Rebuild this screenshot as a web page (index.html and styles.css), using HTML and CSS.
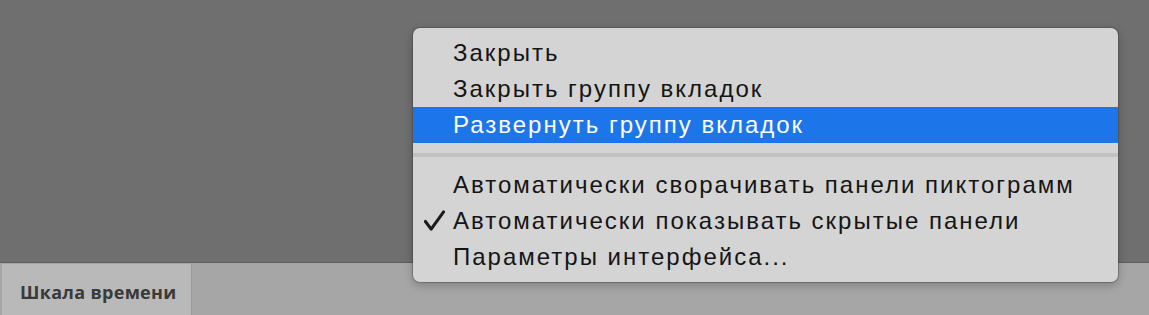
FILE: index.html
```html
<!DOCTYPE html>
<html lang="ru">
<head>
<meta charset="utf-8">
<link rel="stylesheet" href="styles.css">
</head>
<body>
<div class="app">
  <div class="workspace"></div>
  <div class="bottombar">
    <div class="tab">Шкала времени</div>
  </div>
  <div class="menu">
    <div class="item"><span class="mark"></span><span class="label">Закрыть</span></div>
    <div class="item"><span class="mark"></span><span class="label">Закрыть группу вкладок</span></div>
    <div class="item active"><span class="mark"></span><span class="label">Развернуть группу вкладок</span></div>
    <div class="sep"></div>
    <div class="item"><span class="mark"></span><span class="label">Автоматически сворачивать панели пиктограмм</span></div>
    <div class="item"><span class="mark"><svg width="22" height="22" viewBox="0 0 22 22"><path d="M1.5 11.5 L7.5 19.5 L20.5 1.5" fill="none" stroke="#1a1a1a" stroke-width="3.2" stroke-linecap="round" stroke-linejoin="round"/></svg></span><span class="label">Автоматически показывать скрытые панели</span></div>
    <div class="item"><span class="mark"></span><span class="label">Параметры интерфейса...</span></div>
  </div>
</div>
</body>
</html>
```
FILE: styles.css
```css
html, body {
  margin: 0;
  padding: 0;
}
body {
  width: 1149px;
  height: 315px;
  overflow: hidden;
  background: #6e6e6e;
}
.app {
  position: relative;
  width: 1149px;
  height: 315px;
  display: flex;
  flex-direction: column;
}
.workspace {
  height: 262px;
  background: #6f6f6f;
  border-bottom: 1px solid #5d5d5d;
}
.bottombar {
  flex: 1;
  background: #a6a6a6;
  display: flex;
  padding-left: 2px;
  padding-top: 1px;
}
.tab {
  width: 190px;
  background: #b9b9b9;
  border-right: 1px solid #9a9a9a;
  font-family: "Open Sans", "DejaVu Sans", sans-serif;
  font-weight: 700;
  font-size: 18px;
  letter-spacing: 0.3px;
  color: #3a3a3a;
  display: flex;
  align-items: center;
  padding-left: 18px;
  box-sizing: border-box;
  padding-top: 4px;
}
.menu {
  position: absolute;
  left: 413px;
  top: 28px;
  width: 705px;
  height: 254px;
  box-sizing: border-box;
  padding: 7px 0;
  background: #d4d4d4;
  border-radius: 7px;
  box-shadow: 0 0 0 1px rgba(60,60,60,0.35), 0 3px 10px rgba(0,0,0,0.25);
  font-family: "Liberation Sans", Arial, sans-serif;
  font-size: 24px;
  letter-spacing: 2px;
  color: #151515;
}
.item {
  height: 36px;
  display: flex;
  align-items: center;
}
.item.active {
  background: #1c76ea;
  color: #ffffff;
}
.mark {
  width: 40px;
  display: flex;
  justify-content: flex-end;
  box-sizing: border-box;
  padding-left: 11px;
}
.mark svg {
  display: block;
  margin-right: 8px;
}
.label {
  white-space: nowrap;
}
.sep {
  height: 24px;
  display: flex;
  align-items: center;
}
.sep::before {
  content: "";
  display: block;
  width: 100%;
  height: 4px;
  background: #c1c1c1;
}
```
